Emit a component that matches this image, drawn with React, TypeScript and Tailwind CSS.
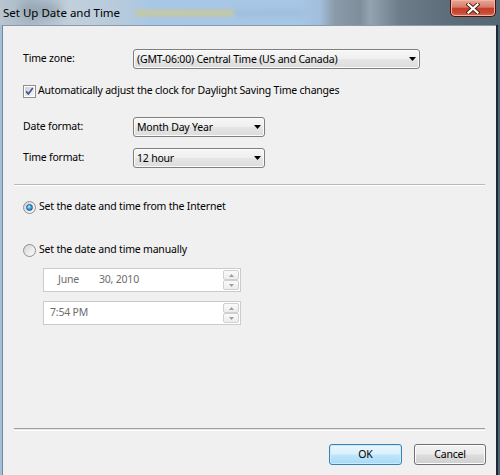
import React from "react";

function Combo({ className, text }: { className: string; text: string }) {
  return (
    <div
      className={`${className} relative h-[20px] rounded-[3px] border border-[#7f7f7f] bg-[linear-gradient(180deg,#f7f7f7_0%,#efefef_48%,#e5e5e5_52%,#dcdcdc_100%)] shadow-[inset_0_0_0_1px_#fbfbfb] flex items-center pl-[3px] text-black`}
    >
      <span className="leading-none">{text}</span>
      <svg className="absolute right-[3px] top-[7px]" width="7" height="4" viewBox="0 0 7 4">
        <path d="M0 0H7L3.5 4Z" fill="#000" />
      </svg>
    </div>
  );
}

function Checkbox() {
  return (
    <div className="w-[13px] h-[13px] border border-[#8e8f8f] bg-white p-[1px]">
      <div className="w-full h-full bg-[linear-gradient(135deg,#c9ccd1_0%,#e9eaec_60%,#f6f6f6_100%)] relative">
        <svg className="absolute -left-[1px] -top-[1px]" width="11" height="11" viewBox="0 0 11 11">
          <path d="M2.2 5.4 L4.4 7.9 L8.8 2" stroke="#3f5595" strokeWidth="1.7" fill="none" />
        </svg>
      </div>
    </div>
  );
}

function Radio({ checked }: { checked?: boolean }) {
  return (
    <div className="w-[13px] h-[13px] rounded-full border border-[#8e8f8f] bg-[linear-gradient(135deg,#cfd1d4_0%,#eeeeef_60%,#fafafa_100%)] flex items-center justify-center">
      {checked && (
        <div className="w-[7px] h-[7px] rounded-full border border-[#1d5a8e] bg-[radial-gradient(circle_at_40%_35%,#b9ecff_0%,#3d9ee0_50%,#11589c_100%)]" />
      )}
    </div>
  );
}

function Spin() {
  return (
    <div className="flex flex-col gap-0 mr-[1px]">
      <div className="w-[16px] h-[10px] border border-[#d0d0d0] rounded-[2px] bg-[linear-gradient(180deg,#fafafa,#ececec)] flex items-center justify-center">
        <svg width="5" height="3" viewBox="0 0 5 3">
          <path d="M0 3H5L2.5 0Z" fill="#a0a0a0" />
        </svg>
      </div>
      <div className="w-[16px] h-[10px] border border-[#d0d0d0] rounded-[2px] bg-[linear-gradient(180deg,#fafafa,#ececec)] flex items-center justify-center">
        <svg width="5" height="3" viewBox="0 0 5 3">
          <path d="M0 0H5L2.5 3Z" fill="#a0a0a0" />
        </svg>
      </div>
    </div>
  );
}

export default function App() {
  return (
    <div className="w-[500px] h-[475px] overflow-hidden relative flex flex-col font-['Noto_Sans','Liberation_Sans',sans-serif] text-[10.5px] tracking-[-0.2px] text-black bg-[#4a6378]">
      {/* title bar */}
      <div className="relative h-[25px] flex items-center bg-[linear-gradient(90deg,#b9c6d1_0%,#a9b8c6_6%,#c2d0dc_14%,#b7cadb_24%,#a8c7e6_30%,#a6c6e6_60%,#a2bfdc_64%,#8b9aa8_67%,#7f8e9b_72%,#94a3b0_74%,#6d7c89_80%,#5f6f7c_88%,#556673_100%)]">
        <div className="absolute left-[135px] top-[10px] w-[100px] h-[6px] rounded-full bg-[#c8c99a] blur-[2px]" />
        <div className="absolute left-[235px] top-[10px] w-[70px] h-[6px] rounded-full bg-[#9fbedc] blur-[2px]" />
        <div className="absolute left-[20px] top-[3px] w-[40px] h-[14px] rounded-full bg-[#8e9eab] blur-[5px] opacity-70" />
        <span className="relative pl-[3px] pt-[1px] text-[11.5px] tracking-normal text-black">Set Up Date and Time</span>
        <div className="absolute left-[450px] top-0 w-[46px] h-[17px] rounded-b-[5px] border border-t-0 border-[#4a1208] shadow-[inset_0_0_0_1px_#f0b5a8] bg-[linear-gradient(180deg,#e9a898_0%,#d87a66_45%,#c2402b_52%,#cb4a33_80%,#d9705a_100%)] flex items-center justify-center">
          <svg width="14" height="11" viewBox="0 0 14 11">
            <path d="M2.5 1.5 L11.5 9.5 M11.5 1.5 L2.5 9.5" stroke="#4a1a10" strokeWidth="4" strokeLinecap="square" />
            <path d="M2.5 1.5 L11.5 9.5 M11.5 1.5 L2.5 9.5" stroke="#ffffff" strokeWidth="2.3" strokeLinecap="square" />
          </svg>
        </div>
      </div>

      <div className="flex flex-1">
        {/* left frame */}
        <div className="w-[3px] bg-[#a7bfd6] border-r border-[#6e8aa8]" />
        {/* content */}
        <div className="w-[493px] bg-[#f0f0f0] border-t border-[#8a9aa9] flex flex-col pl-[20px] pt-[23px]">
          <div className="flex items-center h-[20px]">
            <div className="w-[110px]">Time zone:</div>
            <Combo className="w-[287px]" text="(GMT-06:00) Central Time (US and Canada)" />
          </div>
          <div className="flex items-center h-[14px] mt-[15px]">
            <Checkbox />
            <span className="ml-[2px]">Automatically adjust the clock for Daylight Saving Time changes</span>
          </div>
          <div className="flex items-center h-[20px] mt-[19px]">
            <div className="w-[110px]">Date format:</div>
            <Combo className="w-[132px]" text="Month Day Year" />
          </div>
          <div className="flex items-center h-[20px] mt-[11px]">
            <div className="w-[110px]">Time format:</div>
            <Combo className="w-[132px]" text="12 hour" />
          </div>
          <div className="-ml-[9px] w-[471px] mt-[16px] h-[2px] border-t border-[#b9b9b9] border-b border-b-white" />
          <div className="flex items-center h-[14px] mt-[14px]">
            <Radio checked />
            <span className="ml-[3px]">Set the date and time from the Internet</span>
          </div>
          <div className="flex items-center h-[14px] mt-[29px]">
            <Radio />
            <span className="ml-[3px]">Set the date and time manually</span>
          </div>
          <div className="ml-[20px] mt-[11px] w-[198px] h-[24px] border border-[#cbcbcb] bg-white flex items-center text-[#6d6d6d]">
            <div className="flex-1 flex pl-[14px]">
              <span className="w-[41px]">June</span>
              <span>30, 2010</span>
            </div>
            <Spin />
          </div>
          <div className="ml-[20px] mt-[9px] w-[198px] h-[24px] border border-[#cbcbcb] bg-white flex items-center text-[#6d6d6d]">
            <div className="flex-1 pl-[6px]">7:54 PM</div>
            <Spin />
          </div>
          <div className="-ml-[9px] w-[471px] mt-[103px] h-[3px] border-t border-[#a0a0a0] border-b border-b-white bg-[#e6e6e6]" />
          <div className="flex justify-end gap-[12px] pr-[10px] mt-[13px]">
            <div className="w-[73px] h-[21px] rounded-[3px] border border-[#3c7fb1] shadow-[inset_0_0_0_1px_#c9ecfc] bg-[linear-gradient(180deg,#eaf6fd_0%,#d9f0fc_48%,#bee6fd_52%,#a7d9f5_100%)] flex items-center justify-center">
              OK
            </div>
            <div className="w-[72px] h-[21px] rounded-[3px] border border-[#707070] shadow-[inset_0_0_0_1px_#fcfcfc] bg-[linear-gradient(180deg,#f2f2f2_0%,#ebebeb_48%,#dddddd_52%,#cfcfcf_100%)] flex items-center justify-center">
              Cancel
            </div>
          </div>
        </div>
        {/* right frame */}
        <div className="w-[4px] border-l-2 border-[#1e2a33] bg-[#4a6378]" />
      </div>
    </div>
  );
}
